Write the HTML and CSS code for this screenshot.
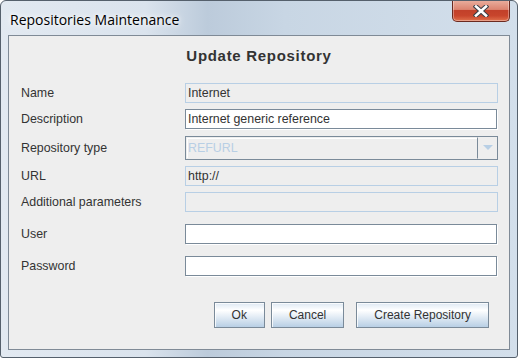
FILE: index.html
```html
<!DOCTYPE html>
<html lang="en">
<head>
    <meta charset="UTF-8">
    <title>Repositories Maintenance</title>
    <link rel="stylesheet" href="styles.css">
</head>
<body>

<div class="window">
    <div class="titlebar">
        <span class="title">Repositories Maintenance</span>
        <button class="close" aria-label="Close">
            <svg width="16" height="12" viewBox="0 0 16 12">
                <path d="M3 1.5 L13 10.5 M13 1.5 L3 10.5" stroke="#3a3f47" stroke-width="4.6" stroke-linecap="square"/>
                <path d="M3 1.5 L13 10.5 M13 1.5 L3 10.5" stroke="#ffffff" stroke-width="2.6" stroke-linecap="square"/>
            </svg>
        </button>
    </div>

    <div class="client">
        <h2>Update Repository</h2>

        <div class="form">
            <div class="row">
                <label>Name</label>
                <div class="field readonly">Internet</div>
            </div>
            <div class="row">
                <label>Description</label>
                <div class="field editable">Internet generic reference</div>
            </div>
            <div class="row row-combo">
                <label>Repository type</label>
                <div class="combo">
                    <span class="combo-value">REFURL</span>
                    <span class="combo-arrow">
                        <svg width="10" height="6" viewBox="0 0 10 6"><path d="M0 0 H10 L5 5 Z" fill="#b8cfe5"/></svg>
                    </span>
                </div>
            </div>
            <div class="row">
                <label>URL</label>
                <div class="field readonly">http://</div>
            </div>
            <div class="row">
                <label>Additional parameters</label>
                <div class="field readonly"></div>
            </div>
            <div class="row spaced">
                <label>User</label>
                <div class="field editable"></div>
            </div>
            <div class="row spaced">
                <label>Password</label>
                <div class="field editable"></div>
            </div>
        </div>

        <div class="buttons">
            <button class="btn">Ok</button>
            <button class="btn">Cancel</button>
            <button class="btn btn-wide">Create Repository</button>
        </div>
    </div>
</div>

</body>
</html>
```

FILE: styles.css
```css
/* Global */
body {
    margin: 0;
    padding: 0;
    font-family: 'Liberation Sans', Arial, sans-serif;
    font-size: 12px;
    color: #333;
    background: #ffffff;
}

/* Window frame */
.window {
    box-sizing: border-box;
    width: 518px;
    height: 358px;
    display: flex;
    flex-direction: column;
    border: 1px solid #55606c;
    border-radius: 6px 6px 3px 3px;
    background: linear-gradient(90deg, #e2e9f1 0%, #dae3ed 28%, #bccbdb 40%, #c8d6e4 55%, #d3dfeb 100%);
    overflow: hidden;
}

.titlebar {
    height: 34px;
    display: flex;
    align-items: flex-start;
    justify-content: space-between;
    flex-shrink: 0;
}

.title {
    font-family: 'Open Sans', 'Noto Sans', sans-serif;
    font-size: 14px;
    color: #000;
    margin: 9px 0 0 9px;
    text-shadow: 0 0 8px #fff, 0 0 4px #fff;
}

.close {
    box-sizing: border-box;
    width: 58px;
    height: 22px;
    margin: -1px 7px 0 0;
    padding: 0;
    display: flex;
    align-items: center;
    justify-content: center;
    border: 1px solid #6b2a20;
    border-top: none;
    border-radius: 0 0 5px 5px;
    background: linear-gradient(#eab0a0 0%, #dc8470 45%, #c2402a 50%, #c8452c 75%, #e0704c 100%);
    box-shadow: inset 0 0 0 1px rgba(255, 255, 255, 0.35);
}

/* Client area */
.client {
    flex: 1;
    margin: 0 7px 7px 7px;
    border: 1px solid #7f8a96;
    background: #eeeeee;
    display: flex;
    flex-direction: column;
}

h2 {
    margin: 10px 0 17px 0;
    height: 20px;
    line-height: 20px;
    text-align: center;
    font-size: 15px;
    font-weight: bold;
    letter-spacing: 0.7px;
    color: #333;
}

/* Form rows */
.form {
    padding: 0 11px 0 12px;
    font-size: 12.4px;
}

.row {
    display: flex;
    align-items: center;
    height: 20px;
    margin-top: 6px;
}

.row:first-child {
    margin-top: 0;
}

.row-combo {
    height: 24px;
    margin-top: 7px;
    margin-bottom: 1px;
}

.row.spaced {
    margin-top: 12px;
}

label {
    width: 164px;
    flex-shrink: 0;
    color: #333;
}

.field {
    box-sizing: border-box;
    flex: 1;
    height: 20px;
    line-height: 18px;
    padding: 0 2px;
    white-space: nowrap;
    overflow: hidden;
}

.field.readonly {
    border: 1px solid #b8cfe5;
    background: #eeeeee;
}

.field.editable {
    border: 1px solid #7a8a99;
    margin-right: 1px;
    background: #ffffff;
    box-shadow: 1px 1px 0 #ffffff;
}

/* Combo box */
.combo {
    box-sizing: border-box;
    flex: 1;
    height: 24px;
    display: flex;
    border: 1px solid #7a8a99;
    background: #eeeeee;
}

.combo-value {
    flex: 1;
    line-height: 20px;
    padding: 0 1px;
    color: #b8cfe5;
    border: 1px solid #eeeeee;
    border-right: 1px solid #7a8a99;
    box-shadow: inset 1px 1px 0 #fff;
}

.combo-arrow {
    width: 19px;
    display: flex;
    align-items: center;
    justify-content: center;
}

/* Buttons */
.buttons {
    display: flex;
    justify-content: flex-end;
    gap: 6px;
    margin-top: 26px;
    padding-right: 20px;
}

.btn {
    box-sizing: border-box;
    height: 26px;
    padding: 0 17px;
    font-family: 'Liberation Sans', Arial, sans-serif;
    font-size: 12px;
    color: #333;
    border: 1px solid #7a8a99;
    background: linear-gradient(#dde8f3 0%, #ffffff 30%, #b8cfe5 100%);
    box-shadow: inset 1px 1px 0 rgba(255, 255, 255, 0.8);
}

.btn-wide {
    margin-left: 6px;
}
```
